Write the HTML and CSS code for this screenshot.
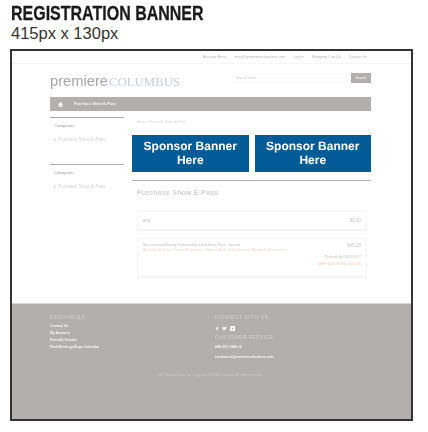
FILE: index.html
```html
<!DOCTYPE html>
<html lang="en">

<head>
    <meta charset="UTF-8">
    <meta name="viewport" content="width=device-width, initial-scale=1.0">
    <title>Registration Banner</title>
    <link rel="stylesheet" href="styles.css">
</head>

<body>
    <div class="heading">
        <h1>REGISTRATION BANNER</h1>
        <p>415px x 130px</p>
    </div>

    <div class="frame">
        <!-- top links -->
        <div class="topbar">
            <span>Account Menu</span>
            <span>email@premierecolumbus.com</span>
            <span>Log In</span>
            <span>Shopping Cart (0)</span>
            <span>Contact Us</span>
        </div>

        <div class="page">
            <div class="masthead">
                <div class="logo"><span class="logo-a">premiere</span><span class="logo-b">COLUMBUS</span></div>
                <div class="search">
                    <div class="search-box">Search store</div>
                    <div class="search-btn">Search</div>
                </div>
            </div>

            <div class="nav">
                <svg class="home" viewBox="0 0 10 10" width="5" height="5">
                    <path d="M5 0 L10 5 L8.500 5 L8.500 10 L6 10 L6 7 L4 7 L4 10 L1.500 10 L1.500 5 L0 5 Z" fill="#fff"/>
                </svg>
                <span>Purchase Show E-Pass</span>
            </div>

            <div class="columns">
                <div class="sidebar">
                    <div class="side-box">
                        <div class="side-title">Categories</div>
                        <div class="side-link">&#9656; Purchase Show E-Pass</div>
                    </div>
                    <div class="side-box">
                        <div class="side-title">Categories</div>
                        <div class="side-link">&#9656; Purchase Show E-Pass</div>
                    </div>
                </div>

                <div class="main">
                    <div class="crumbs">Home / Purchase Show E-Pass</div>
                    <div class="banners">
                        <div class="banner">Sponsor Banner<br>Here</div>
                        <div class="banner">Sponsor Banner<br>Here</div>
                    </div>
                    <div class="panel">
                        <h2>Purchase Show E-Pass</h2>
                        <div class="card card-short">
                            <span class="card-name">ADA</span>
                            <span class="card-price">$0.00</span>
                        </div>
                        <div class="card card-tall">
                            <div class="card-row">
                                <div>
                                    <div class="card-name">Non-Licensed Beauty Professional 2-Day Show Pass - Special</div>
                                    <div class="card-note">Available for Salon Owners/Employees, Makeup Artist, Estheticians &amp; Beauty Professionals o</div>
                                </div>
                                <span class="card-price">$45.00</span>
                            </div>
                            <div class="card-date">Prebook by 03/02/2017</div>
                            <div class="card-sale">SAVE $20.00 (Reg. $65.00)</div>
                        </div>
                    </div>
                </div>
            </div>
        </div>

        <div class="footer">
            <div class="foot-cols">
                <div class="foot-col">
                    <div class="foot-title">RESOURCES</div>
                    <div class="foot-link">Contact Us</div>
                    <div class="foot-link">My Account</div>
                    <div class="foot-link">Friendly Sneaks</div>
                    <div class="foot-link">Find Meetings/Expo Calendar</div>
                </div>
                <div class="foot-col">
                    <div class="foot-title">CONNECT WITH US</div>
                    <div class="social">
                        <svg viewBox="0 0 10 10" width="4" height="5"><path d="M4 10V5.500H2V4h2V2.500C4 1 5 0 6.500 0H8v1.600H7C6.300 1.600 6 2 6 2.600V4h2L7.600 5.500H6V10Z" fill="#fff"/></svg>
                        <svg viewBox="0 0 10 10" width="5" height="5"><path d="M0 8C3 9.500 8.500 8.500 8.500 3L10 1.500 8.500 2C8 .5 5 .5 5 3.200 3 3.200 1.500 2 1 1 0 3 1 4.500 1.500 5L1 5C1.200 6 2 6.500 3 7 2 7.800 1 8 0 8Z" fill="#fff"/></svg>
                        <svg viewBox="0 0 10 10" width="5" height="5"><path fill-rule="evenodd" d="M1 0H9Q10 0 10 1V9Q10 10 9 10H1Q0 10 0 9V1Q0 0 1 0ZM5 3A2 2 0 1 0 5 7 2 2 0 1 0 5 3ZM1.500 1.500V3H3V1.500Z" fill="#fff"/></svg>
                    </div>
                    <div class="foot-title foot-title-2">CUSTOMER SERVICE</div>
                    <div class="foot-link foot-phone">888-291-7469 x3</div>
                    <div class="foot-link foot-mail">customer@premierecolumbus.com</div>
                </div>
            </div>
            <div class="copyright">2017 Emerald Expo, Inc. Copyright 2017 EE Company. All rights reserved.</div>
        </div>
    </div>
</body>

</html>
```

FILE: styles.css
```css
body {
    margin: 0;
    background-color: #fff;
    font-family: 'Liberation Sans', Arial, sans-serif;
    color: #1a1a1a;
}

.heading {
    padding: 3px 0 0 11px;
    height: 49px;
    box-sizing: border-box;
}

.heading h1 {
    margin: 0;
    font-size: 20px;
    line-height: 20px;
    font-weight: bold;
    white-space: nowrap;
    -webkit-text-stroke: 0.3px #1a1a1a;
    transform: scaleX(0.8);
    transform-origin: left center;
}

.heading p {
    margin: 1px 0 0;
    font-size: 16.500px;
    line-height: 18px;
    color: #333;
}

.frame {
    margin-left: 10px;
    width: 403px;
    height: 372px;
    box-sizing: border-box;
    border: 2px solid #333;
    display: flex;
    flex-direction: column;
    background-color: #fff;
    filter: blur(0.35px);
}

.topbar {
    height: 13px;
    box-sizing: border-box;
    border-bottom: 1px solid #f6f6f6;
    padding-right: 44px;
    display: flex;
    justify-content: flex-end;
    align-items: center;
    gap: 8px;
    font-size: 3.700px;
    color: #b4b4b4;
}

.page {
    margin-left: 38px;
    width: 321px;
    flex: 1;
}

.masthead {
    height: 33px;
    display: flex;
    justify-content: space-between;
    align-items: center;
}

.logo {
    white-space: nowrap;
}

.logo-a {
    color: #a9a6a6;
    font-size: 14.700px;
}

.logo-b {
    color: #c6ccd6;
    font-family: 'Liberation Serif', serif;
    font-size: 12.800px;
    margin-left: 1px;
}

.search {
    display: flex;
    gap: 4px;
    margin-top: -5px;
}

.search-box {
    width: 115px;
    height: 10px;
    line-height: 8px;
    font-size: 3.500px;
    color: #c8c8c8;
    padding-left: 3px;
    box-sizing: border-box;
    border: 1px solid #fafafa;
}

.search-btn {
    width: 20px;
    height: 10px;
    line-height: 10px;
    font-size: 3.500px;
    text-align: center;
    color: #fff;
    background-color: #b3afaf;
}

.nav {
    height: 14px;
    background-color: #b3afaf;
    display: flex;
    align-items: center;
    padding-left: 8px;
    gap: 11px;
    font-size: 3.800px;
    font-weight: bold;
    color: #f4f4f4;
}

.home {
    display: block;
}

.columns {
    display: flex;
    gap: 8px;
    margin-top: 6px;
}

.sidebar {
    width: 74px;
    flex-shrink: 0;
}

.side-box {
    height: 47px;
    border-top: 1px solid #aeabab;
    padding: 5px 4px 0;
    box-sizing: border-box;
}

.side-title {
    color: #999;
    font-size: 4.200px;
    margin-bottom: 9px;
}

.side-link {
    color: #d2d2d2;
    font-size: 4.500px;
}

.main {
    flex: 1;
    min-width: 0;
}

.crumbs {
    height: 18px;
    padding-left: 5px;
    font-size: 3.500px;
    line-height: 10px;
    color: #d4d4d4;
}

.banners {
    display: flex;
    gap: 6px;
}

.banner {
    flex: 1;
    height: 37px;
    background-color: #005b96;
    color: #fff;
    font-weight: bold;
    font-size: 12px;
    line-height: 14px;
    text-rendering: geometricPrecision;
    text-align: center;
    padding-top: 4px;
    box-sizing: border-box;
}

.panel {
    margin-top: 8px;
    border-top: 1px solid #aeabab;
    padding: 0 4px 0 5px;
}

.panel h2 {
    margin: 0;
    height: 30px;
    font-size: 7px;
    line-height: 24px;
    letter-spacing: 0.2px;
    color: #d2d2d2;
}

.card {
    border: 1px solid #f4f4f4;
    box-shadow: 0 1px 1px #f5f5f5;
    box-sizing: border-box;
    font-size: 3.500px;
    margin-bottom: 8px;
    padding: 4px 5px;
}

.card-short {
    height: 19px;
    display: flex;
    justify-content: space-between;
    align-items: center;
}

.card-tall {
    height: 39px;
}

.card-row {
    display: flex;
    justify-content: space-between;
}

.card-name {
    color: #bdbdbd;
}

.card-note {
    color: #ecd4cf;
    margin-top: 1px;
}

.card-price {
    font-size: 4.500px;
    color: #c6c6c6;
}

.card-date {
    text-align: right;
    color: #c4c4c4;
    margin-top: 3px;
}

.card-sale {
    text-align: right;
    color: #f0cbbf;
    margin-top: 3px;
}

.footer {
    background-color: #b3afaf;
    height: 116px;
    flex-shrink: 0;
    border-top: 1px solid #d8d6d6;
    box-sizing: border-box;
    padding: 9px 0 0 38px;
}

.foot-cols {
    display: flex;
}

.foot-col {
    width: 165px;
}

.foot-title {
    font-size: 5px;
    line-height: 8px;
    letter-spacing: 0.4px;
    color: #d3d1d1;
    margin-bottom: 2px;
}

.foot-title-2 {
    margin-top: 0;
    margin-bottom: 3px;
}

.foot-link {
    font-size: 3.500px;
    font-weight: bold;
    line-height: 7px;
    color: #f6f6f6;
}

.foot-phone {
    margin-bottom: 3px;
}

.social {
    display: flex;
    align-items: center;
    gap: 3px;
    height: 10px;
}

.social svg {
    display: block;
}

.copyright {
    margin-top: 12px;
    margin-left: 107px;
    font-size: 3.200px;
    color: #c9c7c7;
}
```
